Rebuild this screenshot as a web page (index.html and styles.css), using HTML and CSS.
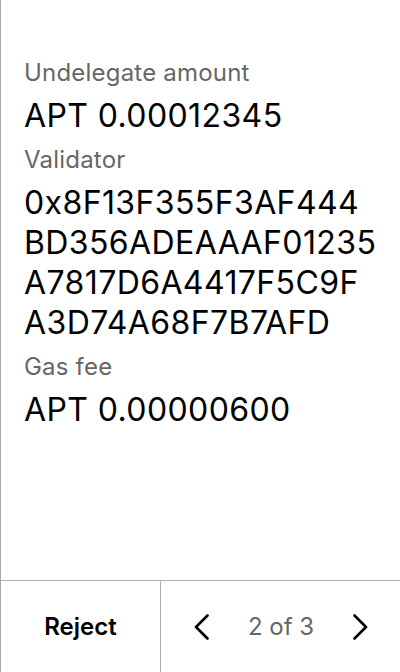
FILE: index.html
```html
<!DOCTYPE html>
<html>
<head>
<meta charset="utf-8">
<link rel="stylesheet" href="styles.css">
</head>
<body>
<div class="screen">
  <main class="content">
    <div class="field">
      <div class="label">Undelegate amount</div>
      <div class="value">APT 0.00012345</div>
    </div>
    <div class="field">
      <div class="label">Validator</div>
      <div class="value">
        <span class="line">0x8F13F355F3AF444</span>
        <span class="line">BD356ADEAAAF01235</span>
        <span class="line">A7817D6A4417F5C9F</span>
        <span class="line">A3D74A68F7B7AFD</span>
      </div>
    </div>
    <div class="field">
      <div class="label">Gas fee</div>
      <div class="value">APT 0.00000600</div>
    </div>
  </main>
  <footer class="footer">
    <div class="reject">Reject</div>
    <div class="pager">
      <svg class="chev" width="15" height="26" viewBox="0 0 15 26"><path d="M13.5 1.5 L2 13 L13.5 24.5" fill="none" stroke="#000" stroke-width="2.6" stroke-linecap="round" stroke-linejoin="round"/></svg>
      <span class="page">2 of 3</span>
      <svg class="chev" width="15" height="26" viewBox="0 0 15 26"><path d="M1.5 1.5 L13 13 L1.5 24.5" fill="none" stroke="#000" stroke-width="2.6" stroke-linecap="round" stroke-linejoin="round"/></svg>
    </div>
  </footer>
</div>
</body>
</html>
```
FILE: styles.css
```css
html, body {
  margin: 0;
  padding: 0;
  background: #fff;
}
body {
  font-family: Inter, "Noto Sans", sans-serif;
  color: #000;
}
.screen {
  width: 399px;
  height: 672px;
  border-left: 1px solid #a8a8a8;
  display: flex;
  flex-direction: column;
}
.content {
  flex: 1;
  padding: 59px 0 0 23px;
  display: flex;
  flex-direction: column;
  gap: 10px;
}
.label {
  font-size: 24px;
  line-height: 28px;
  color: #666;
  margin-bottom: 9px;
  letter-spacing: 0.2px;
}
.value {
  font-size: 32px;
  line-height: 40px;
  color: #000;
  letter-spacing: 0.4px;
}
.line {
  display: block;
}
.footer {
  height: 91px;
  border-top: 1px solid #b0b0b0;
  display: flex;
}
.reject {
  width: 159px;
  border-right: 1px solid #b0b0b0;
  display: flex;
  align-items: center;
  justify-content: center;
  font-size: 24px;
  font-weight: 600;
}
.pager {
  flex: 1;
  display: flex;
  align-items: center;
  justify-content: space-between;
  padding: 0 32px 0 33px;
}
.page {
  font-size: 24px;
  color: #666;
}
.chev {
  display: block;
}
```
